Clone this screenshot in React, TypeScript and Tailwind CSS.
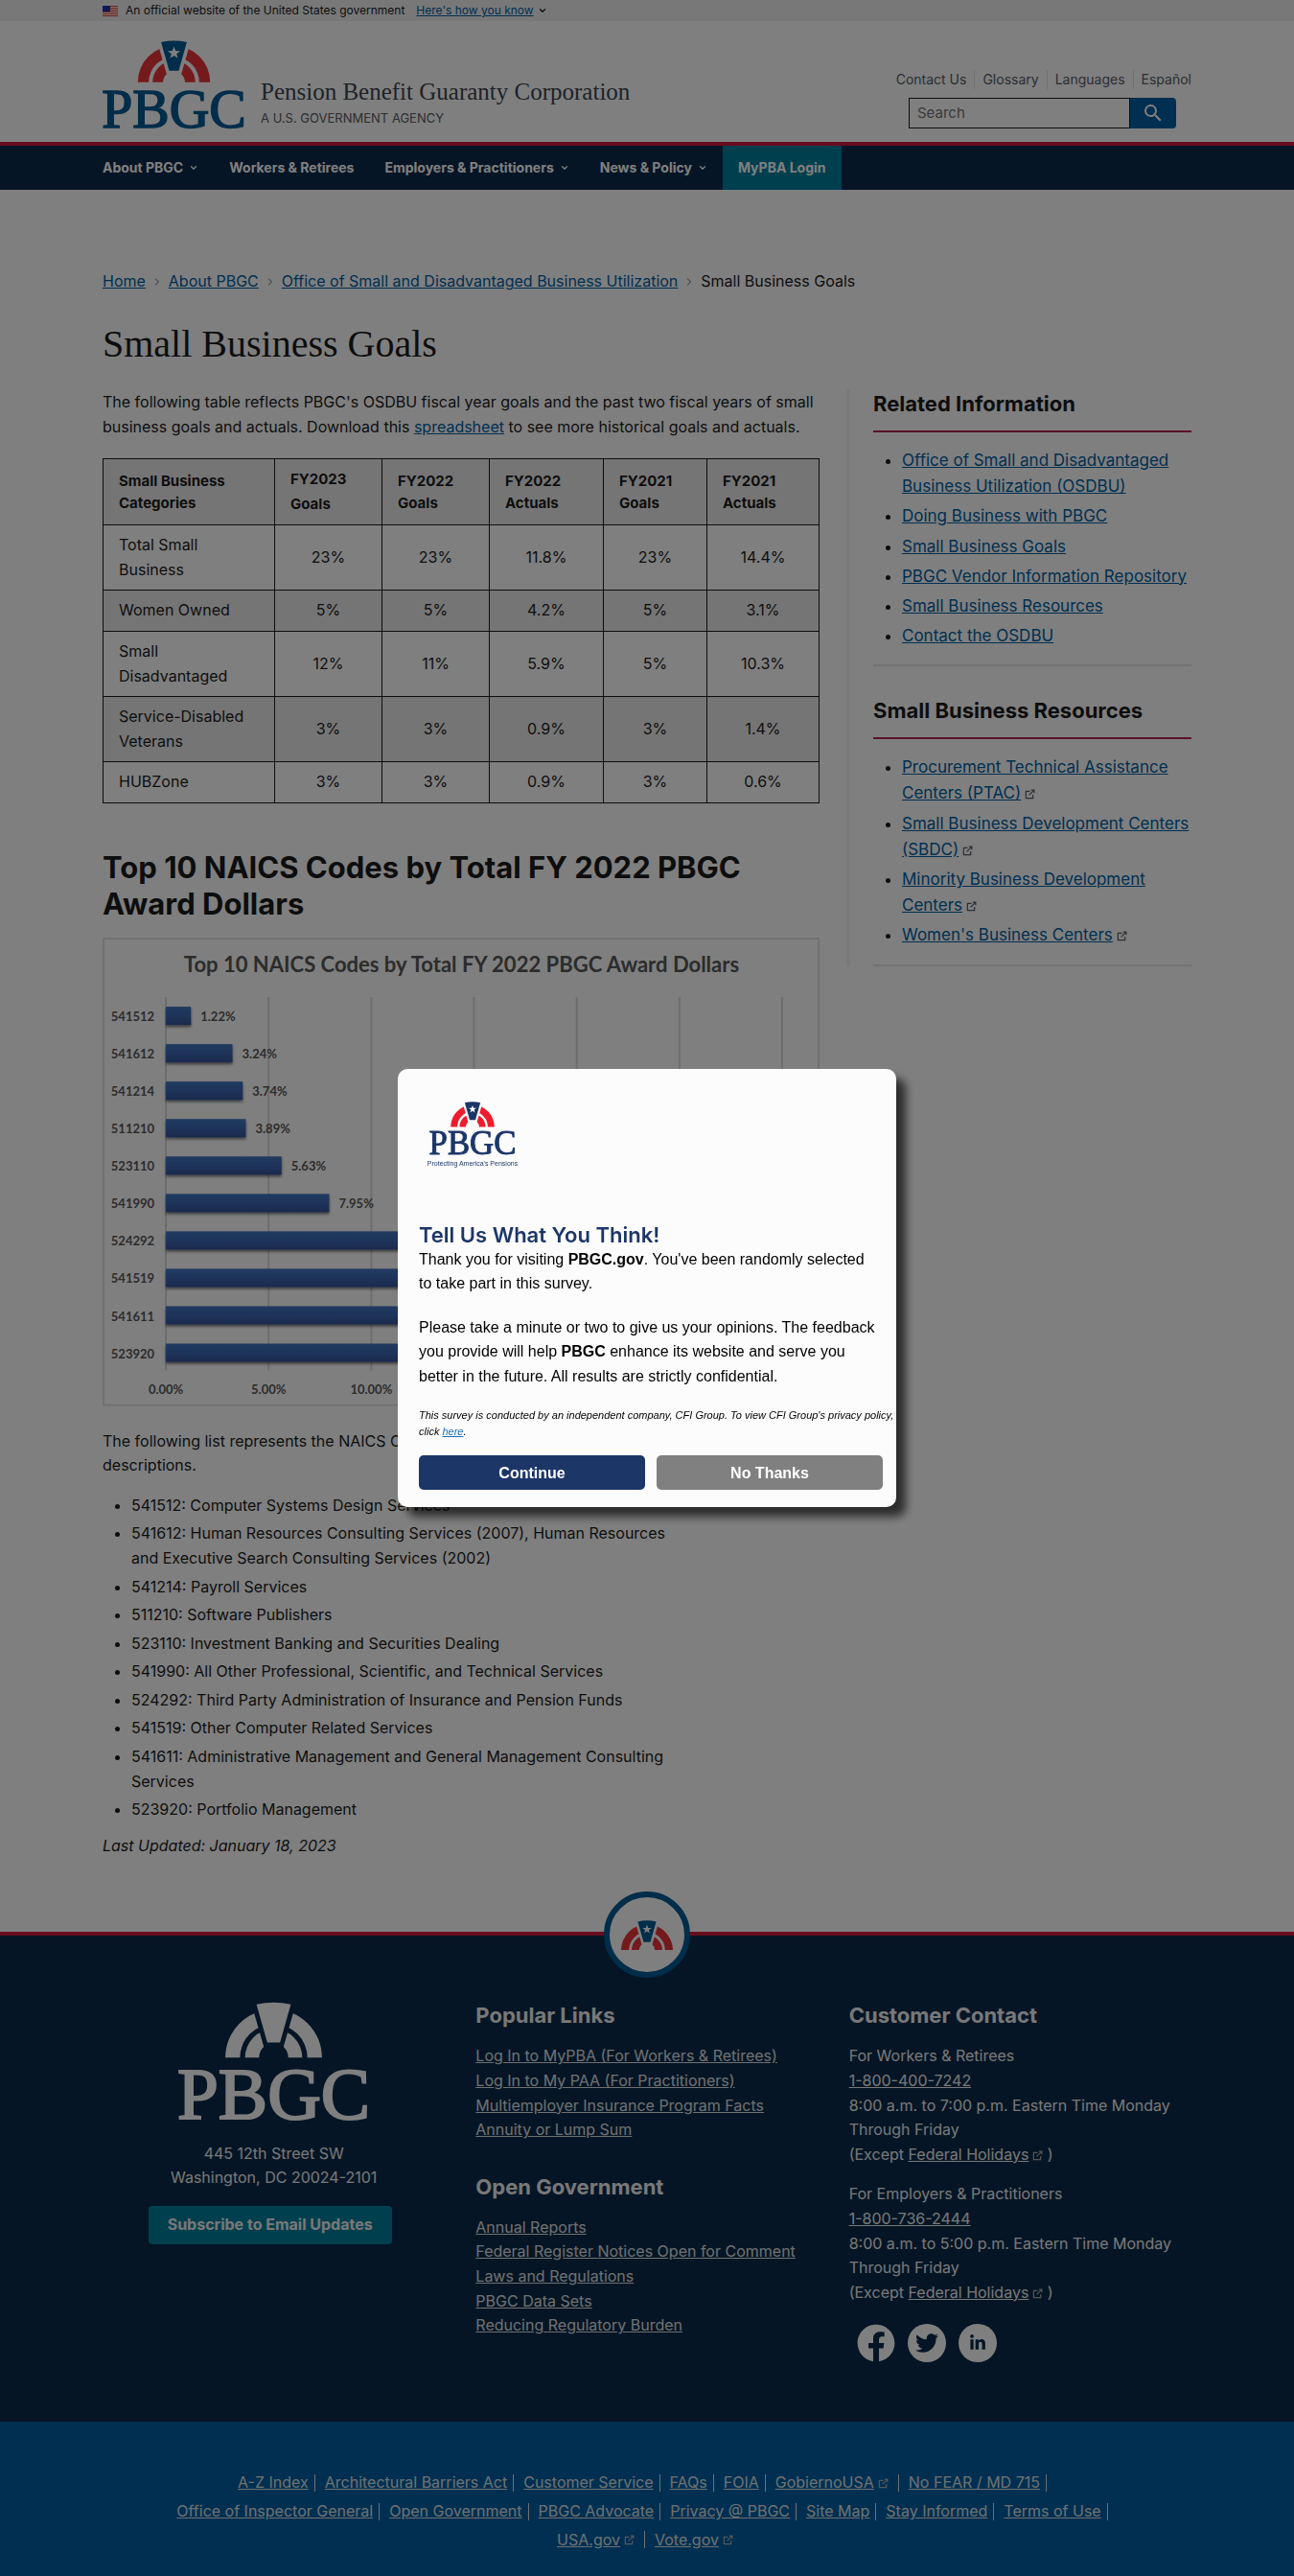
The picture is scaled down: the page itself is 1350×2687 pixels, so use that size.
import React from "react";
import { ChevronDown, ChevronRight } from "lucide-react";
import { FaFacebook, FaLinkedinIn, FaTwitter } from "react-icons/fa";
import { MdSearch } from "react-icons/md";

type ArchProps = { id: string; arch: string; stone: string; star?: string };

function Arch({ id, arch, stone, star }: ArchProps) {
  return (
    <g>
      <mask id={id}>
        <rect x="0" y="0" width="150" height="93" fill="white" />
        <path d="M56.5 -2 H93.5 L82 38 H68 Z" fill="black" />
      </mask>
      <g mask={`url(#${id})`} fill={arch}>
        <path d="M37 44 A38 38 0 0 1 113 44 H101.5 A26.5 26.5 0 0 0 48.5 44 Z" />
        <path d="M52.5 44 A22.5 22.5 0 0 1 97.5 44 H86.5 A11.5 11.5 0 0 0 63.5 44 Z" />
      </g>
      <path d="M61.5 2 Q75 -1 88.5 2 L80 32 H70 Z" fill={stone} />
      {star && (
        <path
          d="M75 6.5 L76.7 11.2 L81.6 11.3 L77.7 14.3 L79.1 19 L75 16.2 L70.9 19 L72.3 14.3 L68.4 11.3 L73.3 11.2 Z"
          fill={star}
        />
      )}
    </g>
  );
}

function Logo({ id, arch, stone, star, text, className }: ArchProps & { text: string; className: string }) {
  return (
    <svg viewBox="0 0 150 93" className={className} overflow="visible" role="img" aria-label="PBGC">
      <Arch id={id} arch={arch} stone={stone} star={star} />
      <text
        x="75"
        y="92"
        textAnchor="middle"
        fontFamily="'Liberation Serif', serif"
        fontSize="58"
        fill={text}
        stroke={text}
        strokeWidth="1.6"
      >
        PBGC
      </text>
    </svg>
  );
}

function Ext({ className = "text-[#565c65]" }: { className?: string }) {
  return (
    <svg viewBox="0 0 12 12" className={`ml-1 inline-block size-[11px] ${className}`} fill="none" stroke="currentColor" strokeWidth="1.3" aria-hidden="true">
      <path d="M6 2.5 H1.5 V10.5 H9.5 V6.5" />
      <path d="M5 7 L10.5 1.5 M7.5 1.2 H10.8 V4.5" />
    </svg>
  );
}

function A({ children }: { children: React.ReactNode }) {
  return (
    <a href="#" className="text-[#005ea2] underline">
      {children}
    </a>
  );
}

const nav = [
  { label: "About PBGC", menu: true },
  { label: "Workers & Retirees", menu: false },
  { label: "Employers & Practitioners", menu: true },
  { label: "News & Policy", menu: true },
];

const rows = [
  ["Total Small Business", "23%", "23%", "11.8%", "23%", "14.4%"],
  ["Women Owned", "5%", "5%", "4.2%", "5%", "3.1%"],
  ["Small Disadvantaged", "12%", "11%", "5.9%", "5%", "10.3%"],
  ["Service-Disabled Veterans", "3%", "3%", "0.9%", "3%", "1.4%"],
  ["HUBZone", "3%", "3%", "0.9%", "3%", "0.6%"],
];

const bars: { code: string; value: number; label?: string }[] = [
  { code: "541512", value: 1.22, label: "1.22%" },
  { code: "541612", value: 3.24, label: "3.24%" },
  { code: "541214", value: 3.74, label: "3.74%" },
  { code: "511210", value: 3.89, label: "3.89%" },
  { code: "523110", value: 5.63, label: "5.63%" },
  { code: "541990", value: 7.95, label: "7.95%" },
  { code: "524292", value: 13 },
  { code: "541519", value: 14 },
  { code: "541611", value: 16 },
  { code: "523920", value: 20 },
];

const codes = [
  "541512: Computer Systems Design Services",
  "541612: Human Resources Consulting Services (2007), Human Resources and Executive Search Consulting Services (2002)",
  "541214: Payroll Services",
  "511210: Software Publishers",
  "523110: Investment Banking and Securities Dealing",
  "541990: All Other Professional, Scientific, and Technical Services",
  "524292: Third Party Administration of Insurance and Pension Funds",
  "541519: Other Computer Related Services",
  "541611: Administrative Management and General Management Consulting Services",
  "523920: Portfolio Management",
];

const related = [
  "Office of Small and Disadvantaged Business Utilization (OSDBU)",
  "Doing Business with PBGC",
  "Small Business Goals",
  "PBGC Vendor Information Repository",
  "Small Business Resources",
  "Contact the OSDBU",
];

const resources = [
  "Procurement Technical Assistance Centers (PTAC)",
  "Small Business Development Centers (SBDC)",
  "Minority Business Development Centers",
  "Women's Business Centers",
];

const legal = [
  { label: "A-Z Index" },
  { label: "Architectural Barriers Act" },
  { label: "Customer Service" },
  { label: "FAQs" },
  { label: "FOIA" },
  { label: "GobiernoUSA", ext: true },
  { label: "No FEAR / MD 715" },
  { label: "Office of Inspector General" },
  { label: "Open Government" },
  { label: "PBGC Advocate" },
  { label: "Privacy @ PBGC" },
  { label: "Site Map" },
  { label: "Stay Informed" },
  { label: "Terms of Use" },
  { label: "USA.gov", ext: true },
  { label: "Vote.gov", ext: true },
];

function Chart() {
  return (
    <svg viewBox="0 0 747 488" className="mt-4 block w-full" fontFamily="Lato, sans-serif" fontWeight="700" fill="#595959">
      <defs>
        <linearGradient id="bar" x1="0" y1="0" x2="0" y2="1">
          <stop offset="0" stopColor="#3f74c0" />
          <stop offset="0.5" stopColor="#3d68b4" />
          <stop offset="1" stopColor="#34539a" />
        </linearGradient>
        <filter id="shade" x="-5%" y="-20%" width="110%" height="170%">
          <feDropShadow dx="0" dy="2" stdDeviation="1.5" floodOpacity="0.55" />
        </filter>
      </defs>
      <rect x="1" y="1" width="745" height="486" fill="none" stroke="#dadada" strokeWidth="1.5" />
      <text x="374" y="36" textAnchor="middle" fontSize="22">
        Top 10 NAICS Codes by Total FY 2022 PBGC Award Dollars
      </text>
      {[0, 1, 2, 3, 4, 5, 6].map((i) => (
        <g key={i}>
          <line x1={66 + i * 107} x2={66 + i * 107} y1="62" y2="451" stroke="#dadada" strokeWidth="2" />
          <text x={66 + i * 107} y="475" textAnchor="middle" fontSize="13">
            {`${i * 5}.00%`}
          </text>
        </g>
      ))}
      {bars.map((b, i) => (
        <g key={b.code}>
          <text x="54" y={87 + i * 39} textAnchor="end" fontSize="13">
            {b.code}
          </text>
          <rect x="66" y={72 + i * 39} width={b.value * 21.4} height="19" fill="url(#bar)" filter="url(#shade)" />
          {b.label && (
            <text x={76 + b.value * 21.4} y={87 + i * 39} fontSize="13">
              {b.label}
            </text>
          )}
        </g>
      ))}
    </svg>
  );
}

function SideBox({ title, items, ext }: { title: string; items: string[]; ext?: boolean }) {
  return (
    <section className="border-b-2 border-[#e6e6e6] pb-4">
      <h2 className="border-b-2 border-[#b3274f] pb-3.5 text-[22px] leading-7 font-bold">{title}</h2>
      <ul className="mt-4 -mr-2 flex list-disc flex-col gap-1 pl-[30px] text-[17px] leading-[1.6]">
        {items.map((t) => (
          <li key={t}>
            <A>{t}</A>
            {ext && <Ext />}
          </li>
        ))}
      </ul>
    </section>
  );
}

function FootLinks({ title, items }: { title: string; items: string[] }) {
  return (
    <section>
      <h2 className="mb-4 text-[22px] leading-7 font-bold">{title}</h2>
      <ul>
        {items.map((t) => (
          <li key={t}>
            <a href="#" className="text-[#dfe1e2] underline">
              {t}
            </a>
          </li>
        ))}
      </ul>
    </section>
  );
}

function Hours({ who, phone, until }: { who: string; phone: string; until: string }) {
  return (
    <p className="mb-4">
      {who}
      <br />
      <a href="#" className="underline">
        {phone}
      </a>
      <br />
      8:00 a.m. to {until} p.m. Eastern Time Monday Through Friday
      <br />
      (Except{" "}
      <a href="#" className="underline">
        Federal Holidays
      </a>
      <Ext className="text-[#a9aeb1]" /> )
    </p>
  );
}

function Survey() {
  return (
    <div className="fixed inset-0 z-10 flex items-center justify-center bg-black/50">
      <div
        role="dialog"
        aria-labelledby="survey-title"
        className="w-[520px] rounded-[10px] bg-[#fcfcfc] pt-[34px] pr-3.5 pb-[18px] pl-[22px] font-['Liberation_Sans',sans-serif] text-base leading-[1.6] text-black shadow-[10px_10px_10px_rgba(0,0,0,0.65)]"
      >
        <div className="ml-2.5 flex h-[126px] w-[92px] flex-col items-center">
          <Logo id="m-survey" className="w-[90px]" arch="#ee1c2e" stone="#1c3668" star="#ffffff" text="#1c3668" />
          <span className="mt-1 text-[7px] leading-3 whitespace-nowrap text-[#1c3668]">Protecting America's Pensions</span>
        </div>
        <h2 id="survey-title" className="font-[Inter,sans-serif] text-[22px] leading-[26px] font-semibold text-[#1c3668]">
          Tell Us What You Think!
        </h2>
        <p className="pr-1.5">
          Thank you for visiting <b>PBGC.gov</b>. You've been randomly selected to take part in this survey.
        </p>
        <p className="mt-5 pr-1.5">
          Please take a minute or two to give us your opinions. The feedback you provide will help <b>PBGC</b> enhance its
          website and serve you better in the future. All results are strictly confidential.
        </p>
        <p className="mt-5 -mr-3 text-[11px] leading-[17px] italic">
          This survey is conducted by an independent company, CFI Group. To view CFI Group's privacy policy, click{" "}
          <a href="#" className="text-[#1571c0] underline">
            here
          </a>
          .
        </p>
        <div className="mt-4 grid grid-cols-2 gap-3 text-white">
          <button className="h-9 rounded-[5px] bg-[#1c3668] font-bold">Continue</button>
          <button className="h-9 rounded-[5px] bg-[#808080] font-bold">No Thanks</button>
        </div>
      </div>
    </div>
  );
}

export default function App() {
  return (
    <div className="min-h-screen bg-white font-[Inter,sans-serif] text-base leading-[1.6] text-[#1b1b1b]">
      <div className="bg-[#f0f0f0]">
        <div className="mx-auto flex h-[22px] max-w-[1200px] items-center px-8 text-xs">
          <svg viewBox="0 0 16 11" className="mr-2 h-[11px] w-4" aria-hidden="true">
            <rect width="16" height="11" fill="#fff" />
            {[0, 2, 4, 6, 8, 10].map((y) => (
              <rect key={y} y={y} width="16" height="1" fill="#db3e1f" />
            ))}
            <rect width="8" height="6" fill="#1e33b1" />
          </svg>
          <span className="mr-3">An official website of the United States government</span>
          <button className="flex items-center gap-1 text-[#005ea2]">
            <span className="underline">Here's how you know</span>
            <ChevronDown className="size-2.5 text-[#1b1b1b]" strokeWidth={3} />
          </button>
        </div>
      </div>

      <header>
        <div className="mx-auto flex max-w-[1200px] items-end justify-between px-8 pt-5 pb-3.5">
          <div className="flex items-end gap-4">
            <Logo id="m-head" className="w-[149px]" arch="#e8343a" stone="#005a94" star="#ffffff" text="#005a94" />
            <div>
              <p className="font-['Liberation_Serif',serif] text-[25px] leading-8 text-[#3d4551]">
                Pension Benefit Guaranty Corporation
              </p>
              <p className="text-[13px] leading-[22px] text-[#565c65]">A U.S. GOVERNMENT AGENCY</p>
            </div>
          </div>
          <div className="flex flex-col items-end">
            <ul className="flex text-sm leading-5 text-[#565c65]">
              {["Contact Us", "Glossary", "Languages", "Español"].map((t, i) => (
                <li key={t} className={i ? "ml-2 border-l border-[#dfe1e2] pl-2" : ""}>
                  <a href="#">{t}</a>
                </li>
              ))}
            </ul>
            <form className="mt-[9px] mr-4 flex h-8">
              <input
                aria-label="Search"
                placeholder="Search"
                className="w-[231px] border border-[#1b1b1b] px-2 text-[15px] placeholder:text-[#757575]"
              />
              <button type="button" aria-label="Search" className="flex w-12 items-center justify-center rounded-r bg-[#005ea2] text-white">
                <MdSearch className="size-6" />
              </button>
            </form>
          </div>
        </div>
        <nav className="border-t-4 border-[#d1193f] bg-[#0b2a4a]">
          <div className="mx-auto flex h-[46px] max-w-[1200px] items-stretch px-4 text-sm font-bold text-white">
            {nav.map((n) => (
              <a key={n.label} href="#" className="flex items-center gap-1.5 px-4">
                {n.label}
                {n.menu && <ChevronDown className="size-2.5" strokeWidth={3} />}
              </a>
            ))}
            <a href="#" className="flex items-center bg-[#007f9c] px-4">
              MyPBA Login
            </a>
          </div>
        </nav>
      </header>

      <main className="mx-auto max-w-[1200px] px-8 pt-[83px] pb-[77px]">
        <nav aria-label="Breadcrumb" className="flex items-center gap-1.5">
          <A>Home</A>
          <ChevronRight className="size-3 text-[#565c65]" />
          <A>About PBGC</A>
          <ChevronRight className="size-3 text-[#565c65]" />
          <A>Office of Small and Disadvantaged Business Utilization</A>
          <ChevronRight className="size-3 text-[#565c65]" />
          <span>Small Business Goals</span>
        </nav>
        <h1 className="mt-7 font-['Liberation_Serif',serif] text-[40px] leading-[48px]">Small Business Goals</h1>

        <div className="mt-6 flex items-start gap-7">
          <article className="min-w-0 flex-1">
            <p>
              The following table reflects PBGC's OSDBU fiscal year goals and the past two fiscal years of small business
              goals and actuals. Download this <A>spreadsheet</A> to see more historical goals and actuals.
            </p>
            <table className="mt-5 w-full table-fixed border-collapse text-center">
              <colgroup>
                <col />
                <col className="w-[112px]" />
                <col className="w-[112px]" />
                <col className="w-[119px]" />
                <col className="w-[108px]" />
                <col className="w-[117px]" />
              </colgroup>
              <thead>
                <tr className="bg-[#ebebeb] text-left text-[15px] leading-[23px]">
                  <th className="border border-[#1b1b1b] px-4 py-2">Small Business Categories</th>
                  <th className="border border-[#1b1b1b] px-4 py-2 leading-[26px]">FY2023 Goals</th>
                  <th className="border border-[#1b1b1b] px-4 py-2">FY2022 Goals</th>
                  <th className="border border-[#1b1b1b] px-4 py-2">FY2022 Actuals</th>
                  <th className="border border-[#1b1b1b] px-4 py-2">FY2021 Goals</th>
                  <th className="border border-[#1b1b1b] px-4 py-2">FY2021 Actuals</th>
                </tr>
              </thead>
              <tbody>
                {rows.map((r) => (
                  <tr key={r[0]} className="even:bg-[#ebebeb]">
                    {r.map((c, i) => (
                      <td key={i} className="border border-[#1b1b1b] px-4 py-2 first:text-left">
                        {c}
                      </td>
                    ))}
                  </tr>
                ))}
              </tbody>
            </table>
            <h2 className="mt-12 text-[31px] leading-[38px] font-bold">Top 10 NAICS Codes by Total FY 2022 PBGC Award Dollars</h2>
            <Chart />
            <p className="mt-6">
              The following list represents the NAICS Codes shown in the chart above along with their full descriptions.
            </p>
            <ul className="mt-4 flex max-w-[590px] list-disc flex-col gap-1 pl-[30px]">
              {codes.map((c) => (
                <li key={c}>{c}</li>
              ))}
            </ul>
            <p className="mt-3 italic">Last Updated: January 18, 2023</p>
          </article>

          <aside className="flex w-[360px] flex-col gap-8 border-l-4 border-[#f3f3f3] pl-6">
            <SideBox title="Related Information" items={related} />
            <SideBox title="Small Business Resources" items={resources} ext />
          </aside>
        </div>
      </main>

      <footer className="text-[#f0f0f0]">
        <div className="relative border-t-4 border-[#d1193f] bg-[#0b2a4a]">
          <div className="absolute -top-[46px] left-1/2 flex size-[90px] -translate-x-1/2 items-center justify-center rounded-full border-[6px] border-[#005a94] bg-white">
            <svg viewBox="37 0 76 44" className="w-[54px]" aria-hidden="true">
              <Arch id="m-seal" arch="#e8343a" stone="#005a94" star="#ffffff" />
            </svg>
          </div>
          <div className="mx-auto grid max-w-[1200px] grid-cols-3 gap-8 px-8 pt-[69px] pb-[62px]">
            <div className="flex flex-col items-center text-center">
              <Logo id="m-foot" className="w-[199px]" arch="#ffffff" stone="#ffffff" text="#ffffff" />
              <address className="mt-[22px] not-italic">
                445 12th Street SW
                <br />
                Washington, DC 20024-2101
              </address>
              <button className="mt-4 mr-2 h-10 rounded bg-[#007f9c] px-5 font-bold">Subscribe to Email Updates</button>
            </div>
            <div className="flex flex-col gap-8">
              <FootLinks
                title="Popular Links"
                items={[
                  "Log In to MyPBA (For Workers & Retirees)",
                  "Log In to My PAA (For Practitioners)",
                  "Multiemployer Insurance Program Facts",
                  "Annuity or Lump Sum",
                ]}
              />
              <FootLinks
                title="Open Government"
                items={[
                  "Annual Reports",
                  "Federal Register Notices Open for Comment",
                  "Laws and Regulations",
                  "PBGC Data Sets",
                  "Reducing Regulatory Burden",
                ]}
              />
            </div>
            <div>
              <h2 className="mb-4 text-[22px] leading-7 font-bold">Customer Contact</h2>
              <Hours who="For Workers & Retirees" phone="1-800-400-7242" until="7:00" />
              <Hours who="For Employers & Practitioners" phone="1-800-736-2444" until="5:00" />
              <div className="ml-2 flex gap-[13px] pt-1">
                <a href="#" aria-label="Facebook">
                  <FaFacebook className="size-10 text-white" />
                </a>
                <a href="#" aria-label="Twitter" className="flex size-10 items-center justify-center rounded-full bg-white text-[#0b2a4a]">
                  <FaTwitter className="size-6" />
                </a>
                <a href="#" aria-label="LinkedIn" className="flex size-10 items-center justify-center rounded-full bg-white text-[#0b2a4a]">
                  <FaLinkedinIn className="size-[18px]" />
                </a>
              </div>
            </div>
          </div>
        </div>
        <div className="bg-[#005ea2] pt-[51px] pb-7">
          <ul className="mx-auto flex max-w-[1010px] flex-wrap justify-center gap-y-1">
            {legal.map((l, i) => (
              <li key={l.label} className="flex items-center">
                <a href="#" className="text-[#dfe1e2] underline">
                  {l.label}
                </a>
                {l.ext && <Ext className="mr-1 text-[#a9aeb1]" />}
                {i < legal.length - 1 && <span className="mr-2.5 ml-1.5 h-[18px] w-px bg-[#dfe1e2]" />}
              </li>
            ))}
          </ul>
        </div>
      </footer>
      <Survey />
    </div>
  );
}
